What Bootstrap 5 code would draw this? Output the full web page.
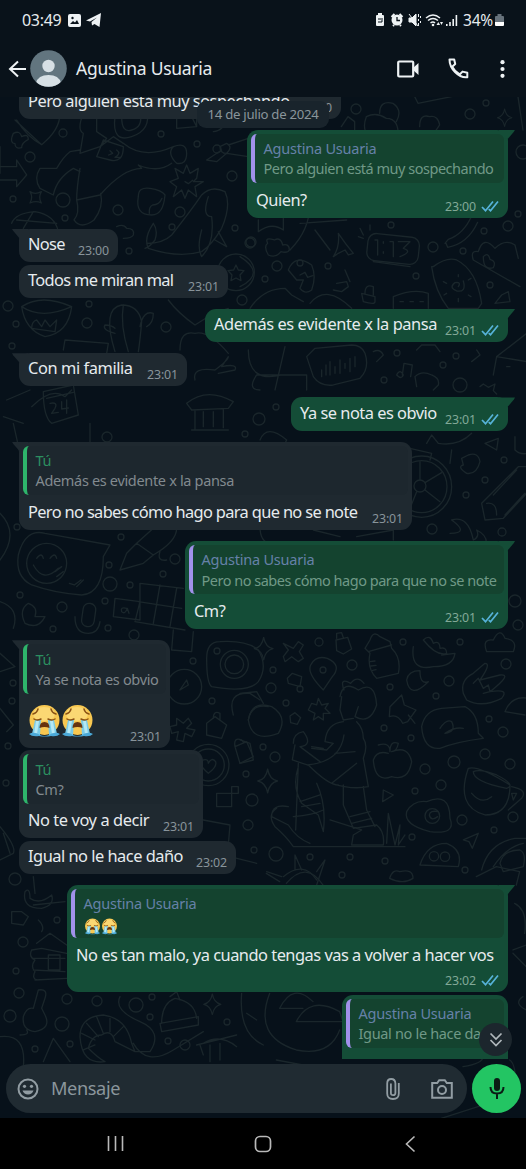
<!DOCTYPE html>
<html lang="es">
<head>
<meta charset="utf-8">
<meta name="viewport" content="width=device-width, initial-scale=1">
<title>Agustina Usuaria</title>
<link href="https://cdn.jsdelivr.net/npm/bootstrap@5.3.0/dist/css/bootstrap.min.css" rel="stylesheet">
<script src="https://cdn.jsdelivr.net/npm/bootstrap@5.3.0/dist/js/bootstrap.bundle.min.js"></script>
<style>
  body { width: 526px; height: 1169px; background: #09121a; color: #e6ebee; font-family: "Noto Sans", sans-serif; font-size: 16.4px; }
  svg { display: block; flex: none; }
  .statusbar { height: 40px; padding: 0 22px; font-size: 16px; line-height: 40px; }
  .clock { letter-spacing: -.3px; }
  .charge { margin-left: -20px; letter-spacing: -.2px; font-size: 15.5px; }
  .chatbar { height: 57px; padding: 0 21px 0 8px; }
  .avatar { width: 37px; height: 37px; margin-left: 3px; }
  .contact { font-size: 17.5px; margin-left: 9px; letter-spacing: -.28px; }
  .chat { height: 1021px; background: #07111a; }
  .doodles { top: 0; left: 0; fill: none; stroke: #1a262b; stroke-linecap: round; stroke-linejoin: round; }
  .thread { height: 962px; padding: 0 18px 0 19px; }
  .datechip { top: 4px; left: 197px; width: 132px; height: 27px; line-height: 27px; border-radius: 9px; background: #19242c; color: #8a959b; font-size: 13.2px; letter-spacing: -.28px; z-index: 2; }
  .bubble { width: var(--w); border-radius: 11px; background: #1f2930; margin-top: 2.4px; flex: none; }
  .bubble.tail { margin-top: 11px; }
  .bubble.first { margin-top: -11.6px; }
  .bubble.out { background: #144d37; align-self: flex-end; }
  .bubble.tail::before { content: ""; position: absolute; top: 0; width: 16px; height: 9px; }
  .bubble.in.tail::before { left: -7px; background: #1f2930; clip-path: polygon(0 0, 100% 0, 100% 100%, 45% 100%, 7% 22%); }
  .bubble.out.tail::before { right: -7px; background: #144d37; clip-path: polygon(0 0, 100% 0, 93% 22%, 56% 100%, 0 100%); }
  .quotewrap { padding: 4px 4px 0; height: 54.9px; }
  .quote { position: relative; height: 49.5px; border-radius: 6px; border-left: 4.5px solid #a191ea; background: #14432f; padding: 4.5px 0 0 8.5px; font-size: 14.5px; line-height: 20.2px; color: #709987; white-space: nowrap; overflow: hidden; letter-spacing: -.33px; }
  .quote .snug { letter-spacing: -.49px; }
  .in .quote { background: #1d272e; border-color: #2eb56b; color: #828a8f; }
  .who { color: #6681a8; letter-spacing: -.22px; }
  .in .who { color: #2c8f60; }
  .line { height: 33.3px; padding: 0 9px 3px; }
  .line.tall { height: 52.6px; }
  .said { line-height: 24px; margin-bottom: 3.2px; white-space: nowrap; letter-spacing: -.5px; }
  .said.snug { letter-spacing: -.65px; }
  .said.loose { letter-spacing: -.42px; }
  .faces { margin-bottom: 7px; }
  .stamp { font-size: 12.4px; line-height: 16px; color: #88949a; letter-spacing: -.15px; }
  .out .stamp { color: #82a997; }
  .ticks { margin: 0 0 3px 5px; }
  .jump { width: 33px; height: 33px; right: 14px; top: 926px; border-radius: 50%; background: #1c262d; z-index: 3; }
  .composer { left: 6px; right: 5px; top: 967px; }
  .field { width: 461px; height: 49px; border-radius: 25px; background: #202b32; padding: 0 14px 0 11px; color: #8b969c; font-size: 18.2px; letter-spacing: -.4px; }
  .mic { width: 49px; height: 49px; border-radius: 50%; background: #23c563; }
  .sysnav { height: 51px; background: #000; padding-left: 107px; }
</style>
</head>
<body class="overflow-hidden">
<svg width="0" height="0" class="position-absolute">
  <symbol id="cry" viewBox="0 0 33 34">
    <circle cx="16.5" cy="16" r="15" fill="#f8c851"/>
    <ellipse cx="16" cy="10" rx="11" ry="7" fill="#fbd873"/>
    <path d="M7 16h6l-1 15q-5 1-8-1zM20 16h6l3 14q-4 2-8 1z" fill="#79cbe7"/>
    <path d="M8 17h3l-2 13H6zM22 17h3l2 13h-3z" fill="#b4e8f4"/>
    <path d="M1 30q5-3 11 1 4 2 9 0 6-4 11-1-3 3-9 2-6 1-12 0-7 1-10-2z" fill="#4ba9d8"/>
    <path d="M11.500 24q0-6 5-6t5 6q-5-2-10 0z" fill="#66330e"/>
    <path d="M5 10q4-1 5-5M28 10q-4-1-5-5M6 15q3 2 7 0M20 15q4 2 7 0" fill="none" stroke="#8b5214" stroke-width="1.500" stroke-linecap="round"/>
  </symbol>
  <symbol id="ticks" viewBox="0 0 18 12"><path d="M1 7l3.500 3.700L12 1.500M7.700 9.200l1.800 1.500L17 1.500" fill="none" stroke="#56b2d8" stroke-width="1.700"/></symbol>
  <symbol id="spark" viewBox="-30 -36 60 72"><path d="M0-34Q5-5 28 0 5 5 0 34-5 5-28 0-5-5 0-34z"/></symbol>
</svg>

<header>
  <div class="statusbar d-flex align-items-center">
    <span class="clock">03:49</span>
    <svg style="margin-left:7px" width="13" height="13" viewBox="0 0 13 13"><rect width="13" height="13" rx="2" fill="#eef2f4"/><path d="M2 10l3-3 2 1.500L9 6l2 4z" fill="#09121a"/><circle cx="4.500" cy="4" r="1.200" fill="#09121a"/></svg>
    <svg style="margin-left:5px" width="15" height="14" viewBox="0 0 15 14"><path d="M0 7.500L15 0l-1.500 14-5-3L6 12.500 5.500 9 11 4.500 4 8.500z" fill="#eef2f4"/></svg>
    <div class="d-flex align-items-center ms-auto">
      <svg width="108" height="16" viewBox="0 0 108 16" fill="#eef2f4">
        <path d="M1 4q0-1 1-1h1V1h4v2h1q1 0 1 1v9q0 1-1 1H2q-1 0-1-1z"/><path d="M3 10h4V6M3 7h3" stroke="#09121a" fill="none"/>
        <circle cx="22" cy="8" r="5.500"/><path d="M16.500 5l3-3M27.500 5l-3-3M18 14l1-1M26 14l-1-1" stroke="#eef2f4" stroke-width="2"/><path d="M22 5v3.500h3" stroke="#09121a" stroke-width="1.300" fill="none"/>
        <path d="M34 6h3l4-4v12l-4-4h-3zM34 2l9 12" stroke="#eef2f4"/><path d="M43.500 2v3M43.500 7v2M43.500 11v3M45.500 4v2M45.500 9v2" stroke="#eef2f4"/>
        <g fill="none" stroke="#eef2f4" stroke-width="1.500"><path d="M51 6q7-6 14 0M53 8.500q5-4 10 0M55.500 11q2.500-2 4.500 0"/></g><circle cx="58" cy="13" r="1.300"/><path d="M61.500 13l1.800-3 1.800 3z"/><path d="M65 10l1.500 3L68 10z"/>
        <path d="M71 12h1.600v2H71zM74.200 10h1.600v4h-1.600zM77.400 7H79v7h-1.600zM80.600 3h1.600v11h-1.600z"/>
      </svg>
      <span class="charge">34%</span>
      <svg style="margin-left:2px" width="9" height="12" viewBox="0 0 9 12"><path d="M0 3q0-1 1-1h1.500V0h4v2H8q1 0 1 1v5H0z" fill="#66717a"/><path d="M0 8h9v3q0 1-1 1H1q-1 0-1-1z" fill="#fff"/></svg>
    </div>
  </div>
  <div class="chatbar d-flex align-items-center">
    <svg width="19" height="18" viewBox="0 0 19 18" fill="none" stroke="#eef2f4" stroke-width="2"><path d="M10 1.500L2 9l8 7.500M2 9h16"/></svg>
    <svg class="avatar" viewBox="0 0 37 37"><defs><clipPath id="av"><circle cx="18.500" cy="18.500" r="18.300"/></clipPath></defs><g clip-path="url(#av)"><path d="M0 0h37v37H0z" fill="#62757f"/><circle cx="18.500" cy="16" r="6.200" fill="#d7e0e5"/><path d="M6 33q2-8 12.500-8T31 33l-4 5H10z" fill="#d7e0e5"/></g></svg>
    <span class="contact">Agustina Usuaria</span>
    <svg class="ms-auto" width="22" height="18" viewBox="0 0 22 18"><rect x="1.200" y="1.500" width="15" height="15" rx="1" fill="none" stroke="#eef2f4" stroke-width="2.200"/><path d="M16 8l5.500-5v12L16 10z" fill="#eef2f4"/></svg>
    <svg style="margin-left:29px" width="21" height="21" viewBox="0 0 21 21" fill="none" stroke="#eef2f4" stroke-width="2"><path d="M1.500 1.500h4.700l1 4.500-3 2.800q2.500 5 7.500 7.700l2.800-2.900 4.800 1.100v4.500Q13 20 7 14 1.500 8.500 1.500 1.500z" stroke-linejoin="round"/></svg>
    <svg style="margin-left:31px" width="5" height="18" viewBox="0 0 5 18" fill="#eef2f4"><circle cx="2.500" cy="2.200" r="2.100"/><circle cx="2.500" cy="9" r="2.100"/><circle cx="2.500" cy="15.800" r="2.100"/></svg>
  </div>
</header>

<main class="chat position-relative overflow-hidden">
  <!-- wallpaper doodles, each group drawn at three times its size -->
  <svg class="doodles position-absolute" width="526" height="1021" viewBox="0 97 526 1021" stroke-width="4">
    <g transform="translate(0 120) scale(.3333)">
      <path d="M50 0q30 50 75 74Q180 30 180-20M45 0l80 74M40 40q20-10 25 10 20-10 20 8-20 10-20 25-20 5-20-12-18-2-5-31"/>
      <path d="M250-20q-20 50 0 60l-10 60 60-20 20-25-30-20V-20M345-10q-10 80 50 60 60-20 45-80M365-10q0 50 30 40 35-10 25-50M300 80l40-30 30 20q60 50 150 10M290 110l20-50 60 20q0 50-40 40zM240 90l-30 5q-20 15-40 50l-50 0q-20 30 0 60l40 20q10-50 60-80l20 10M240 145q-10 60-10 95l70-15q70-80 125-80l-10-10q60 25 100-5M230 240q10 40-8 60 20 30 60 0 30-40 20-80M520 80q40-15 40 20t-30 30q-30-30-10-50M330 92l8 8-12 5M350 90q15 10-5 22h15"/>
      <path d="M530-40v65l60-5V-40M590 20l-15-30M640 35q30 0 60-60M680 70q20 10 0 30-20 0-20-20zM685 75l60-20M665 90l-45 30 30 5 30-25 65 10M0 140h50v-20l30 45-30 35v-20H0M0 160v-80"/>
      <path d="M580 185l30 0-25 15 5 30-25-20-10 25-10-25-25 20 10-30-20-15 25-10-10-30 25 15 10-25 10 25 25-15-5 30zM555 185l10 6 13-10"/>
      <path d="M415 230q0-30 35-25t45 20q-5 60-40 60-50 0-40-55zM448 280q-2-20 10-25 20 0 28-20M90 215q15 10 34 0-10 18 0 34-15-8-34 0 10-18 0-34zM35 310q10-30 70-35 60 10 70 60M50 300l120 10M100 275l-30 50M350 320q20-10 30 5 25 0 20 20-5 10-30 10"/>
      <path d="M440 370q50 0 75-25 60-75 90-120 30-30 70-10 20 40-10 110-30 50-60 70-70 20-160-10-15-30 15-75 15 20 5 50-15 20-30 25M625 230q-20 60 10 60 10 80-30 120-15-25 0-80M655 335l25 45-35-20"/>
      <circle cx="708" cy="457" r="55"/><path d="M708 435l7 15 17 2-12 13 3 17-15-8-15 8 3-17-12-13 17-2zM65 560q60-40 150 0-10 80-80 90-60-20-70-90zM65 560q60 40 150 0M95 625q0-20 15-25l15 20 10-20 15 20 20-20-5 35zM345 695q-40-130 20-140 50 0 60 50-5 60-10 90M370 555q-10 60 15 140M345 640q-40-10-30-25 20 0 30 10M420 620q10-50 40-40 0 30-20 40M190 690l5-30 130 10-5 30M505 540q30 40 80 75 60-40 100-50M540 690q0-60 45-50 40-10 100 60M585 780q-10-40 60-30 40-30 40-40l-20 30q50-10 40 10l-50 10"/>
    </g>
    <g transform="translate(240 120) scale(.3333)">
      <path d="M210 250q0 80-60 140M180 310l140-10M55 300v35q40-30 75-5v-40M225 330l45 60M280 410q20-30 15-70 20 30 45 60l-15 5-10-15-20 10zM360 325l10 20M390 315v15M355 350l15 5"/>
      <rect x="382" y="345" width="155" height="82" rx="25" transform="rotate(6 450 385)"/><path d="M400 425l110 15M405 360h8v45M430 365v5M430 395v5M450 365h10v45M475 365h35l-20 20q30 10-10 25"/>
      <path d="M83 370q-10-20 20-10 20-10 25 15 20-5 20 15-5 10-25 5-15 20-38 10-15-25-2-35zM145 450q20-50 70-15 15 35 0 75-20 15-35-5l10-25-20 0zM180 465l15-8 8 15 15-5M30 565q40-60 105-60l20 20 35 20M210 550q50-60 125 15M0 410q80 50 0 90"/>
      <path d="M580 440q40-30 70-20 60 30 75 130l-10 15H625q-40-50-50-125z"/><path d="M655 500q10-15-10-12-20 15 5 25 30 5 20-30M655 470v-6M685 480l8-5M620 490l-10-5M620 520l-8 5M655 535v10M685 525l8 5"/>
      <path d="M615 370l10-12q45-15 70-70M618 370l5 12q60-10 90-75M700 420q-10-30 15-25 15-50 50-10 30-30 60-10l10 40M700 420l140 80M730 410q15-15 20 8 20 5 10 25-30 10-30-33M765 550l20-25 20-10 5 30z"/>
      <path d="M460 565v-35q60-25 105-10v45M480 545h10M510 545h10M540 545h10M365 520l40 10v15q0 10-35 0zM375 520q0-30 25-20v25M290 490l30-5 5 15-20 15-25-5M315 450l15 35"/>
      <path d="M200 710l20 60q20 30 60 25l80-20q30-30 15-75-10-25-40-25l-110 10zM245 750v20M258 735v30M270 725v40M285 740v20M300 720v40M315 730v15M330 715v40M345 710v30M25 690q0 100 100 75M135 680l-30 130M60 810q-40 0-10-45h150v45M400 695q20-10 30 10l-20 20M470 765q10-20 20 0-5 15-20 0zM487 765l5-35 25 5-5 35M525 770q20-20 50-5 25 10 20 30l-15 15M530 800l-5-30M695 725l25-20-10-15M760 765l10-55 90 15M770 710l90-70M800 740h10M720 800l10-8 15 10 20-10-5 20 10 10M530 690l15-15h40l15 20"/>
    </g>
    <g transform="translate(0 320) scale(.3333)">
      <path d="M95 260q60-60 100-30l20-20M130 215l90-20 15 90-80 25q-25-20-25-95zM140 235l80-18M150 250q25-5 15 15l-10 15 20-3M185 245l0 22 20-3M200 240v40M20 240l70-30M10 290l60 20M560 250q60-50 140-5l-15 20-110 5zM585 270v60M670 268v55M610 275v45M640 275v45M575 330h110"/>
    </g>
    <g transform="translate(0 430) scale(.3333)">
      <path d="M55 375q20-80 80-65l195 35-20 35q0 110-65 115-80-5-150-30-50-25-40-90z"/><circle cx="140" cy="400" r="60"/><path d="M100 405q30 55 75 10M110 385q15-20 20 0M150 385q15-20 20 0M165 425l20-15M170 440l20-15M208 460l15 5 20-15M230 470l20-20M360 420l20-50 30-30 50 35-30 25zM410 340l50-45M460 375q70-40 70-80M480 365q-10 30 20 25M345 505l75 10v55l-80-10zM420 460l130 15M415 515l130 20M420 460v55l-15 60M480 465l-20 115M530 475l-20 115M405 575l150 25M380 535q-20-5-15 10 10 10 17-10l5 15M85 520q30 10 20 40h30q-20 40-60 20-20-40 10-60z"/>
      <rect x="247" y="520" width="38" height="70" rx="18" transform="rotate(8 265 555)"/><path d="M225 560q0 50 40 50 30 0 35-35M0 515q60 20 40 80M0 250q60 60 0 140M40-20l20 90M270-20v60"/>
    </g>
    <g transform="translate(240 400) scale(.3333)">
      <ellipse cx="545" cy="260" rx="90" ry="92"/><ellipse cx="545" cy="260" rx="76" ry="78"/><circle cx="540" cy="258" r="18"/><path d="M540 240v-55M555 248l50-30M555 270l45 35M530 275l-20 50M510 145l65 15-5 20M560 130l15-25 20 25q60 10 100-30M635 150l-5 40M735 130l40-15-5 35zM685 165q30-10 35 20-10 40-40 35-30-20-10-25l-5-20z"/>
      <path d="M725 310l110-110h30M725 310l10 50 55-5 75-80M740 310q30-5 30 35M760 285l70-75M795 345l60-65M630 400q60 0 5-40 50-15 65 60 20-10 10-30 40 20 25 55M60 380q0 45 30 50M220 390l80 20M350 410l110-20v30M825 110v40q15 15 40 10M60 120q20-50 80 0l-10 20"/>
    </g>
    <g transform="translate(0 630) scale(.3333)">
      <path d="M620 85q0-50 40-50 80-5 115 25 30 50 0 95-30 35-140 15-15-10-15-85z"/><circle cx="703" cy="103" r="42"/><circle cx="703" cy="103" r="28"/><circle cx="553" cy="170" r="52"/><path d="M540 180l20-30 5 15zM520 0l-5 60 60 5 5-60M530 265l20 15 15-15 10 15-15 15 25 5-10 20-20-10-5 25-20-5 5-25-20 5-5-20 20-5zM700 255q-20-70 50-65l30 20M745 270q10-50 60-40M620 280l25-20 35 25-15 40-45-10zM640 265q0-25 20-15v20M705 350l35-15 20 45-40 20zM705 350q-5-30 20-20l5 5"/>
      <circle cx="625" cy="405" r="62"/><circle cx="625" cy="405" r="48"/><path d="M625 430q-35-30-15-40 15-5 15 10 10-20 22-5 5 15-22 35zM650 490h45v40h-45zM695 470h20v20h-20zM0 590q50 60 40 80l-40 20M10 610l20 60M610 570l80 15-5 60M690 680l80 20M0 70l45 40-45 15M0 235l40 50-20 20"/>
    </g>
    <g transform="translate(240 630) scale(.3333)">
      <path d="M375 55l15-25q10-30 30-10l30 15 5 20q30 30 20 75l-65 15q-30-30-20-75zM385 65l70-20M390 95l15-2M393 108l15-2M398 121l10-2M250 180q-50-50-38-75 15-30 50-20 45 20 15 55zM130 40l30 15 15-20 15 10-12 20 12 20-15 10-20-15-20 15-5-15 15-20-15-20zM288 30l35-8 12 35-25 15-20-10zM290 25v-15l15-2 5 15M520 50q-10 75 60 60 60 0 65-40l-40 5M550 30q20-20 30 10 20-10 20 15 20-5 20 15-30 10-70-40M500 150q10 60 65 5-25 10-25-33-35 0-40 28zM740 65q-15-40 20-35 20-40 35-5 40 5 25 40z"/>
      <path d="M670 190q-10-40 30-60l35-30q20 0-15 50l60-15q40-5-30 50 60-10 35 20-60 30-105 5zM700 160l15-15 15 30 15-10 5 20-20 5M450 230l35-35 8 30 35 15-25 35-15 5q-15-30-40-20zM505 255l20 25M545 290q10-50 60-55l70-5q40 20 40 80l15 15q-80 10-130 30-50 5-55-65zM600 295q20-30 35-20 15 30-20 35 30-20 55-15"/>
      <path d="M415 345q35-10 35 20 0-35 25-25-5 25-20 25 50-20 60 30-10 60-60 45-50 20-55-50 10-30 45-20M215 220l15 5 5-20 10 20 20-5-10 15 15 15-20 0 0 20-15-10-15 10 5-20-20-10zM142 145l15-15 28 10-5 30-35-10zM150 258l15-10 17 15-10 20-20-5z"/>
      <path d="M300 200q10-50 55-20 50-30 55 45-20 60-65 35l10-30M312 180q-15-40 20-20 20-25 40 0M305 200l-5 40 10 30 30-5M310 275q-50 5-55 60l25 5-20 20-45-5M350 275q20 20 20 50 15 20 0 60l15 85q-50 10-110-10l75-60M285 370l60-5M215 350l35 5M165 345l-8 45 45 15q100-10 110-90M160 340q0-30 30-35 30 40-10 45l60 45M205 405q60 60 90 60M175 400l-8 200M175 410q-20 60 10 110l50 35 15 50q10-80-20-145M180 515l60-20M185 530l55-10M310 465v60l30 70 70-10q25 20 20 60h-95l5-30 25-15-95-30M370 470l10 70 25 50M330 560l60-15M335 580l60-15M160 560q60-5 90-20M110 535q-30 20-5 55 35 30 55 60h335M145 530q-50-10-50 30l50 25q25 40 65 55M440 640l5-90 20 95 15-60-5 60 20-30"/>
      <path d="M500 545q20-35 60-30 70-30 70 50 20 50-60 40-80-20-70-60z"/><circle cx="577" cy="558" r="22"/><path d="M595 545q-25-5-27 10 5 20 25 5M685 415q30-10 125 50 0 90-75 90-90-25-50-140zM700 425q0 30 100 50 30-10-30-40-50-20-70-10zM815 470q50 10 30 35l-40 35M695 490q30 35 60 10M815 490l15 0-10 20zM540 705q20-65 80-65 50 20 35 70z"/><circle cx="582" cy="679" r="14"/><circle cx="615" cy="680" r="14"/><path d="M430 480l30 15-32 20zM670 630l45-20-18 45-10-20zM80 725l45 15M165 720v-45l20 45M230 725l25-35-25 75M130 740q60-50 100 10M725 720q20-80 100-95h40M760 710q40-60 90-70M780 700q10-40 60-40 20 10 10 50l-60 15zM795 245q20-50 70-40M795 245l60 10M0 330l30 10 10 50-40 10M25 270q10-60 70-40 50 30 20 80-80 30-90-40zM0 190l50-5 20 35"/>
      <use href="#spark" x="38" y="20" width="66" height="72"/><use href="#spark" x="50" y="415" width="66" height="76"/>
    </g>
    <g transform="translate(0 870) scale(.3333)">
      <path d="M75 65q15-15 15 20 30 20 65-10 10 30-30 40-60 0-50-50zM100 20l5 50M100 105l95-10M35 125l30 0 20 15-15 25-35-5zM115 150q20 20 10 35M110 220l40-30 50 35M95 240l30-5 75 15M100 265h95M100 300l95 5M105 330l95-5M95 240q-10 20 10 30-15 20 0 35-10 20 5 25M145 255h35v45h-35zM115 360q30-5 20 25l-10 30 10 20q20 40-30 50-40-5-35-45 10-30 30-25zM60 495q30 0 20-15M130 575l30-70 50 70M0 500q80-10 70 90"/>
      <path d="M240 500q0-60 70-65 70 10 85 85l10 25-60-30q-10-40-40-20-30 0-40 40 30 30 50 40-70 10-75-75zM260 460l35 40M290 440l20 50M330 445l0 40M245 490l40 20M250 540l35-15M340 500l30-30M360 380q-20 40 60 75 70 30 30 90l-45 0M400 520q40 70 120 20l90-55M485 460q0-60 40-75 60 10 65 60M480 460l115-20v25l-110 20zM510 380l20-15 10 25M590 525l120-30M600 525l10 30M610 520q50-30 100 10M630 525v50M660 520v50M725 370q-10 120 65 155M740 430l30 20"/><use href="#spark" x="608" y="370" width="58" height="66"/>
    </g>
    <g transform="translate(263 870) scale(.3333)">
      <path d="M10 10l40 25M70 40q60-70 110 5M20 370q-50 130 80 170 100 20 130-60M50 415q40-80 100-20M100 455q40-80 130-30l10 30zM50 415h70M380 25q10-30 30-20 40-10 40 20-30 20-70 0M640 20l60-30 70 15-10 40M750 240l40-15M750 250l40 40M755 100q40 20 30 90M740 570q20 10 20 100M770 670l-250 80M780 380q-30 20 10 40M40 570l80 15M600 590q60-10 60-30"/>
    </g>
    <g transform="translate(263 0) scale(.3333)">
      <path d="M455 290l10 20 150-30M310 350q30-15 60 5 40 0 35 60M310 350q-15 40 10 60M350 340q0-40 40-30 30 20 10 55M470 380q0-40 30-30 25-5 30 25l-20 30h-40M235 380l20-30 20 15v30l-30 10M765 290l15 100"/><use href="#spark" x="700" y="325" width="50" height="56"/>
    </g>
    <g transform="translate(0 97)" stroke-width="1.3" id="dots"></g>
  </svg>

  <div class="thread position-relative overflow-hidden d-flex flex-column">
    <div class="datechip position-absolute text-center">14 de julio de 2024</div>

    <div class="bubble in first position-relative" style="--w:322px"><div class="line d-flex align-items-end justify-content-between"><span class="said">Pero alguien está muy sospechando</span><span class="stamp">23:00</span></div></div>

    <div class="bubble out tail position-relative" style="--w:261px"><div class="quotewrap"><div class="quote"><div class="who">Agustina Usuaria</div><div class="snug">Pero alguien está muy sospechando</div></div></div><div class="line d-flex align-items-end"><span class="said me-auto">Quien?</span><span class="stamp">23:00</span><svg class="ticks" width="18" height="12"><use href="#ticks"/></svg></div></div>

    <div class="bubble in tail position-relative" style="--w:99px"><div class="line d-flex align-items-end justify-content-between"><span class="said snug">Nose</span><span class="stamp">23:00</span></div></div>
    <div class="bubble in position-relative" style="--w:209px"><div class="line d-flex align-items-end justify-content-between"><span class="said snug">Todos me miran mal</span><span class="stamp">23:01</span></div></div>

    <div class="bubble out tail position-relative" style="--w:303px"><div class="line d-flex align-items-end"><span class="said loose me-auto">Además es evidente x la pansa</span><span class="stamp">23:01</span><svg class="ticks" width="18" height="12"><use href="#ticks"/></svg></div></div>

    <div class="bubble in tail position-relative" style="--w:168px"><div class="line d-flex align-items-end justify-content-between"><span class="said loose">Con mi familia</span><span class="stamp">23:01</span></div></div>

    <div class="bubble out tail position-relative" style="--w:217px"><div class="line d-flex align-items-end"><span class="said me-auto">Ya se nota es obvio</span><span class="stamp">23:01</span><svg class="ticks" width="18" height="12"><use href="#ticks"/></svg></div></div>

    <div class="bubble in tail position-relative" style="--w:393px"><div class="quotewrap"><div class="quote"><div class="who">Tú</div><div>Además es evidente x la pansa</div></div></div><div class="line d-flex align-items-end justify-content-between"><span class="said snug">Pero no sabes cómo hago para que no se note</span><span class="stamp">23:01</span></div></div>

    <div class="bubble out tail position-relative" style="--w:323px"><div class="quotewrap"><div class="quote"><div class="who">Agustina Usuaria</div><div class="snug">Pero no sabes cómo hago para que no se note</div></div></div><div class="line d-flex align-items-end"><span class="said me-auto">Cm?</span><span class="stamp">23:01</span><svg class="ticks" width="18" height="12"><use href="#ticks"/></svg></div></div>

    <div class="bubble in tail position-relative" style="--w:151px"><div class="quotewrap"><div class="quote"><div class="who">Tú</div><div>Ya se nota es obvio</div></div></div><div class="line tall d-flex align-items-end justify-content-between"><span class="faces d-flex"><svg width="33" height="34"><use href="#cry"/></svg><svg width="33" height="34"><use href="#cry"/></svg></span><span class="stamp">23:01</span></div></div>
    <div class="bubble in position-relative" style="--w:184px"><div class="quotewrap"><div class="quote"><div class="who">Tú</div><div>Cm?</div></div></div><div class="line d-flex align-items-end justify-content-between"><span class="said loose">No te voy a decir</span><span class="stamp">23:01</span></div></div>
    <div class="bubble in position-relative" style="--w:217px"><div class="line d-flex align-items-end justify-content-between"><span class="said">Igual no le hace daño</span><span class="stamp">23:02</span></div></div>

    <div class="bubble out tail position-relative" style="--w:441px"><div class="quotewrap"><div class="quote"><div class="who">Agustina Usuaria</div><div class="d-flex pt-1"><svg width="17" height="17"><use href="#cry"/></svg><svg width="17" height="17"><use href="#cry"/></svg></div></div></div><div class="line tall d-flex flex-column justify-content-between"><span class="said mb-0" style="margin-top:3px">No es tan malo, ya cuando tengas vas a volver a hacer vos</span><span class="d-flex align-items-end justify-content-end"><span class="stamp">23:02</span><svg class="ticks" width="18" height="12"><use href="#ticks"/></svg></span></div></div>

    <div class="bubble out position-relative" style="--w:166px"><div class="quotewrap"><div class="quote"><div class="who">Agustina Usuaria</div><div>Igual no le hace daño</div></div></div><div class="line d-flex align-items-end"><span class="said me-auto">Bueno Como</span></div></div>
  </div>

  <div class="jump position-absolute d-flex align-items-center justify-content-center">
    <svg width="14" height="15" viewBox="0 0 14 15" fill="none" stroke="#b0b8bc" stroke-width="1.700"><path d="M1.500 1.500L7 7l5.500-5.500M1.500 8L7 13.500 12.500 8"/></svg>
  </div>

  <div class="composer position-absolute d-flex align-items-center justify-content-between">
    <div class="field d-flex align-items-center">
      <svg width="22" height="22" viewBox="0 0 22 22" fill="none" stroke="#929da3" stroke-width="2"><circle cx="11" cy="11" r="9.500"/><path d="M5.500 12.500h11q-1.500 4-5.500 4t-5.500-4z" fill="#929da3" stroke="none"/><circle cx="7.500" cy="8.300" r="1.600" fill="#929da3" stroke="none"/><circle cx="14.500" cy="8.300" r="1.600" fill="#929da3" stroke="none"/></svg>
      <span class="me-auto" style="margin-left:12px">Mensaje</span>
      <svg width="14" height="22" viewBox="0 0 14 22" fill="none" stroke="#929da3" stroke-width="1.800"><path d="M12.800 5v10.500q0 5.500-5.800 5.500t-5.800-5.500V5.500Q1.200 1 5.200 1t4.200 4.500V15q0 2.200-2.300 2.200T4.900 15V5.500"/></svg>
      <svg style="margin-left:31px" width="22" height="20" viewBox="0 0 22 20" fill="none" stroke="#929da3" stroke-width="2"><path d="M1.200 4h5l2-2.800h5.600l2 2.800h5v14.800H1.200z"/><circle cx="11" cy="11" r="4"/></svg>
    </div>
    <div class="mic d-flex align-items-center justify-content-center">
      <svg width="16" height="21" viewBox="0 0 16 21" fill="none" stroke="#0a1c14" stroke-width="2"><rect x="5" y="0" width="6" height="13" rx="3" fill="#0a1c14" stroke="none"/><path d="M1.500 9q0 6.500 6.500 6.500T14.500 9M8 15.500V21"/></svg>
    </div>
  </div>
</main>

<nav class="sysnav position-relative d-flex align-items-center">
  <svg width="17" height="17" viewBox="0 0 17 17" stroke="#b9b9b9" stroke-width="1.600"><path d="M1.500 1v15M8.500 1v15M15.500 1v15"/></svg>
  <svg style="margin-left:130px" width="18" height="18" viewBox="0 0 18 18" fill="none" stroke="#b9b9b9" stroke-width="1.700"><rect x="1.500" y="1.500" width="15" height="15" rx="4.500"/></svg>
  <svg style="margin-left:133px" width="11" height="18" viewBox="0 0 11 18" fill="none" stroke="#b9b9b9" stroke-width="1.600"><path d="M9.500 1.500L1.500 9l8 7.500"/></svg>
</nav>
<script>
  // loose circles of the wallpaper: x, y, radius
  const dots = [[63,36,4],[161,37,3],[197,47,3],[217,52,4],[232,79,5],[30,60,5],[13,102,3],[63,103,7],[118,113,5],[180,115,5],[65,121,3],[172,130,3],[235,131,3],[250,146,5],[129,154,3],[242,203,5],[8,209,5],[16,227,3],[89,207,3],[87,226,5],[166,230,5],[12,249,3],
    [360,103,5],[356,12,5],[470,17,5],[486,6,3],[251,145,5],[300,166,3],[277,169,5],[391,128,3],[433,150,5],[508,129,5],[484,134,3],[518,117,3],[463,154,3],[328,169,3],[416,179,3],[265,182,3],[490,188,3],[523,55,7],[397,256,3],[384,283,3],[456,259,3],[443,268,3],[460,288,7],[276,310,3],[259,322,6],[245,337,3],
    [107,340,5],[17,430,3],[121,440,3],[109,468,3],[175,462,5],[110,487,7],[130,488,3],[163,477,3],[20,498,3],[62,510,5],[53,532,3],[105,504,3],[108,531,3],[134,538,5],[504,363,3],[485,383,3],[466,398,3],[432,432,5],[502,435,4],[515,504,6],[518,528,5],
    [193,564,3],[217,554,3],[212,604,3],[13,586,3],[12,604,3],[8,649,3],[6,686,3],[246,677,3],[252,703,6],[248,728,5],[254,753,3],[319,545,4],[403,545,3],[460,545,3],[352,568,5],[271,591,5],[273,573,3],[300,592,3],[323,573,3],[286,606,3],[390,590,3],[449,584,5],[506,567,5],[436,599,3],[489,622,3],[503,635,5],[384,631,3],[411,641,3],[263,650,3],[275,660,5],[454,665,6],[485,657,5],[510,667,5],[425,672,5],[441,688,5],[415,694,3],[462,723,5],[513,720,5],[494,733,3],[412,740,3],[276,757,7],[310,760,3],[350,760,3],[385,764,3],[465,773,3],
    [15,782,6],[57,823,3],[23,845,5],[16,874,3],[19,896,5],[10,919,6],[67,902,5],[97,904,5],[62,927,7],[136,908,7],[152,900,3],[150,920,3],[168,944,3],[185,948,5],[70,947,3],[35,952,3],[227,925,3],[342,778,3]];
  document.getElementById('dots').innerHTML = dots.map(([x, y, r]) => `<circle cx="${x}" cy="${y}" r="${r}"/>`).join('');
</script>
</body>
</html>
